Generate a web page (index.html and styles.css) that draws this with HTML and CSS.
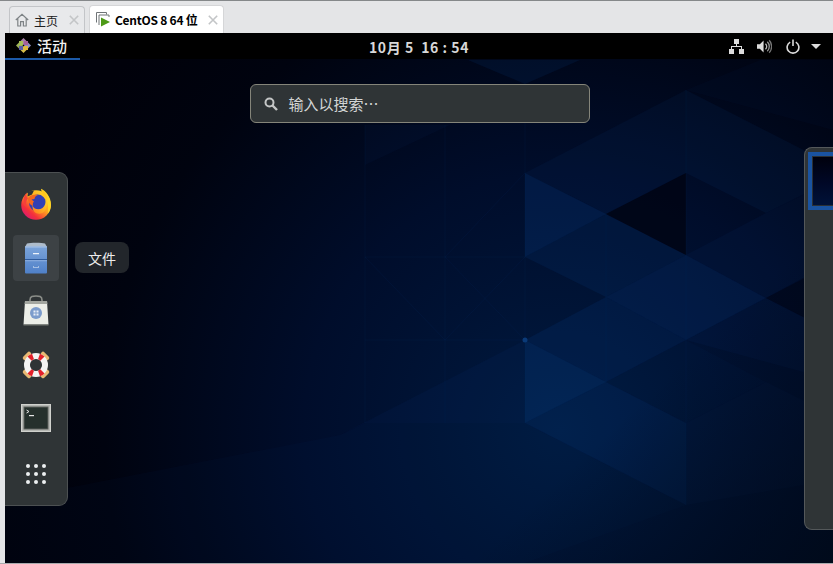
FILE: index.html
```html
<!DOCTYPE html>
<html lang="zh-CN">
<head>
<meta charset="utf-8">
<title>CentOS 8 64 位</title>
<link rel="stylesheet" href="styles.css">
</head>
<body>
<div class="vm">
  <div class="tabs">
    <div class="tab tab-home">
      <svg class="tab-icon" width="14" height="14" viewBox="0 0 14 14"><path d="M.8 7 7 1.200 13.200 7M2.800 5.500V13H5.600V8.600H8.400V13H11.200V5.500" fill="none" stroke="#7d8285" stroke-width="1.200"/></svg>
      <span class="tab-label">主页</span>
      <svg class="tab-close" width="10" height="10" viewBox="0 0 10 10"><path d="M.8.8 9.200 9.200M9.200.8.8 9.200" stroke="#c3c5c7" stroke-width="1.600"/></svg>
    </div>
    <div class="tab tab-active">
      <svg class="tab-icon tab-icon-vm" width="15" height="15" viewBox="0 0 15 15"><path d="M.5 10.500V.5H10.500V2.500M3 13V3H13V5" fill="none" stroke="#6f7477"/><path d="M5 5.500 14 10 5 14.500Z" fill="#4d9a16"/></svg>
      <span class="tab-label tab-label-bold">CentOS 8 64 位</span>
      <svg class="tab-close" width="10" height="10" viewBox="0 0 10 10"><path d="M.8.8 9.200 9.200M9.200.8.8 9.200" stroke="#c3c5c7" stroke-width="1.600"/></svg>
    </div>
  </div>
  <div class="guest">
    <svg class="wallpaper" viewBox="5 33 828 530" preserveAspectRatio="none">
      <defs>
        <radialGradient id="glow" gradientUnits="userSpaceOnUse" cx="560" cy="430" r="570">
          <stop offset="0" stop-color="#001a40"/>
          <stop offset=".45" stop-color="#000d2b"/>
          <stop offset=".8" stop-color="#00030f"/>
          <stop offset="1" stop-color="#00010a"/>
        </radialGradient>
        <linearGradient id="fade" gradientUnits="userSpaceOnUse" x1="620" y1="420" x2="800" y2="610">
          <stop offset="0" stop-color="#000a18" stop-opacity="0"/>
          <stop offset="1" stop-color="#000a18" stop-opacity=".8"/>
        </linearGradient>
      </defs>
      <rect x="5" y="33" width="828" height="530" fill="url(#glow)"/>
      <g fill="#0a4a9a">
        <polygon opacity=".08" points="525,173 686,90 686,173 606,214"/>
        <polygon opacity=".09" points="686,90 833,165 833,180 766,213 686,173"/>
        <polygon opacity=".04" points="686,90 760,60 833,60 833,130"/>
        <polygon opacity=".22" points="525,173 606,214 525,257"/>
        <polygon opacity=".13" points="525,257 606,214 686,255 606,297"/>
        <polygon opacity=".07" points="686,255 766,213 833,180 833,262 766,298"/>
        <polygon opacity=".18" points="606,297 686,255 766,298 686,340"/>
        <polygon opacity=".14" points="525,340 606,297 686,340 606,382"/>
        <polygon opacity=".07" points="686,340 766,298 833,332 833,380"/>
        <polygon opacity=".24" points="525,340 606,382 525,423"/>
        <polygon opacity=".15" points="525,423 606,382 686,423 686,505"/>
        <polygon opacity=".04" points="606,382 686,340 766,382 686,423"/>
        <polygon opacity=".05" points="686,423 766,382 833,415 833,480 686,505"/>
        <polygon opacity=".07" points="525,340 525,423 365,423 340,435"/>
        <polygon opacity=".04" points="340,435 365,423 525,423 686,505 525,563 5,563 5,500"/>
        <polygon opacity=".12" points="468,60 580,60 525,84"/>
        <polygon opacity=".05" points="365,125 450,125 365,165"/>
      </g>
      <g fill="#00030f">
        <polygon opacity=".7" points="606,214 686,173 686,255"/>
        <polygon opacity=".4" points="766,298 805,278 805,318"/>
      </g>
      <g fill="none" stroke="#0a3c80" stroke-opacity=".1">
        <path d="M445 125V423M365 125V423M525 84V423M606 214V382M686 90V505"/>
        <path d="M365 257H525M365 340H525M445 257 525 173M445 340 525 257M365 257 445 340M445 257 525 340"/>
      </g>
      <rect x="5" y="33" width="828" height="530" fill="url(#fade)"/>
      <circle cx="525" cy="340" r="2.500" fill="#0a3a78"/>
    </svg>
    <header class="topbar">
      <div class="activities">
        <svg width="15" height="15" viewBox="0 0 15 15"><rect width="15" height="15" fill="#000"/><path d="M7.500 0 11 3.500 7.500 7 4 3.500Z" fill="#a67ea6"/><path d="M15 7.500 11.500 11 8 7.500 11.500 4Z" fill="#8f8fc0"/><path d="M7.500 15 4 11.500 7.500 8 11 11.500Z" fill="#d8bf4a"/><path d="M0 7.500 3.500 4 7 7.500 3.500 11Z" fill="#9db35a"/><rect x="3" y="3" width="4" height="4" fill="#a5bf55"/><rect x="8" y="3" width="4" height="4" fill="#a5609a"/><rect x="3" y="8" width="4" height="4" fill="#5d5fa5"/><rect x="8" y="8" width="4" height="4" fill="#e2b93c"/></svg>
        <span>活动</span>
      </div>
      <div class="clock">10月 5&nbsp; 16 : 54</div>
      <div class="status">
        <svg width="15" height="15" viewBox="0 0 15 15"><path d="M5 0H10V5H8V7H13V10H15V15H10V10H12V8H3V10H5V15H0V10H2V7H7V5H5Z" fill="#dcdcdc"/></svg>
        <svg class="volume" width="15" height="15" viewBox="0 0 16 15"><path d="M0 5H3L7 1V14L3 10H0Z" fill="#dcdcdc"/><path d="M9 4.500A4 4 0 0 1 9 10.500" fill="none" stroke="#bbb" stroke-width="1.400"/><path d="M11 2.500A7 7 0 0 1 11 12.500" fill="none" stroke="#999" stroke-width="1.400"/><path d="M13 .8A10 10 0 0 1 13 14.200" fill="none" stroke="#777" stroke-width="1.400"/></svg>
        <svg class="power" width="14" height="15" viewBox="0 0 15 15"><path d="M4.500 2.800A6.300 6.300 0 1 0 10.500 2.800" fill="none" stroke="#dcdcdc" stroke-width="1.700"/><path d="M7.500 0V7" stroke="#dcdcdc" stroke-width="1.700"/></svg>
        <svg class="caret" width="10" height="5" viewBox="0 0 10 5"><path d="M0 0H10L5 5Z" fill="#dcdcdc"/></svg>
      </div>
    </header>
    <div class="overview">
      <nav class="dock">
        <div class="dock-item">
          <svg width="32" height="32" viewBox="0 0 32 32">
            <defs>
              <linearGradient id="ffo" x1=".9" y1=".05" x2=".1" y2=".95"><stop offset="0" stop-color="#ffe02b"/><stop offset=".45" stop-color="#ffa01f"/><stop offset=".75" stop-color="#f5303a"/><stop offset="1" stop-color="#d5147f"/></linearGradient>
              <linearGradient id="ffs" x1="1" y1="0" x2="0" y2="1"><stop offset="0" stop-color="#ffdc26"/><stop offset="1" stop-color="#ff7a1f"/></linearGradient>
            </defs>
            <circle cx="16" cy="17" r="14.800" fill="url(#ffo)"/>
            <path d="M21 .8C26 3 31 9 31 17 31 20 30 23 28 25.500 28.500 20 28 13 25 9 23.500 6.500 21.500 4 21 .8Z" fill="#ffd526"/>
            <path d="M8 3.500 7.500 8.500 12 6.500 14 2.500Z" fill="#2f3436"/>
            <path d="M7 4.500C6 7 6.500 9 8 10 5.500 13 5.500 17 7 20L4 17C3 11 4 7 7 4.500Z" fill="#f5403a"/>
            <circle cx="17.500" cy="15" r="8.500" fill="#3140b4"/>
            <path d="M8 10C10 7 14 6 18 7 15.500 8 14.500 9.500 14.500 11L11.500 11.500 14 13.500C13 14.500 12.500 16 13 18 10 17 7.500 13.500 8 10Z" fill="#f4671f"/>
            <path d="M12.500 17.500C14 21.500 19 22.500 22.500 20 25 18 26 15 25.500 11 28 16 27 22 22.500 25 17 27.500 12 23.500 12.500 17.500Z" fill="url(#ffs)"/>
            <path d="M21 1C25 3.500 27.500 7.500 27.500 12 26 9.500 24 8.500 22.500 8 23 5.500 22 3 21 1Z" fill="#ffc61f"/>
          </svg>
        </div>
        <div class="dock-item dock-item-hover">
          <svg width="24" height="32" viewBox="0 0 24 32">
            <defs>
              <linearGradient id="cab" x1="0" y1="0" x2="0" y2="1"><stop offset="0" stop-color="#7ba4da"/><stop offset="1" stop-color="#4f80c8"/></linearGradient>
            </defs>
            <path d="M3 1.500C6 .5 18 .5 21 1.500L23 5H1Z" fill="#aebccb"/>
            <rect x="1" y="4.500" width="22" height="27" rx="1" fill="url(#cab)"/>
            <rect x="1" y="4.500" width="22" height="1" fill="#a9c4ea"/>
            <rect x="1" y="17" width="22" height="1.200" fill="#2f5b9c"/>
            <rect x="1" y="18.200" width="22" height="1" fill="#8fb1e2"/>
            <path d="M9 11H15V12.200H9ZM9 24 10 25H14L15 24V25.500H9Z" fill="#eef3fa"/>
          </svg>
        </div>
        <div class="dock-item">
          <svg class="nudge-up" width="26" height="31" viewBox="0 0 26 31">
            <path d="M7 9V5C7 1 10 1 13 1S19 1 19 5V9" fill="none" stroke="#8a8d88" stroke-width="1.600"/>
            <path d="M2 6H24L25.500 29.500H.5Z" fill="#eceee8"/>
            <path d="M2 6H24L24.400 9H1.600Z" fill="#a3a6a0"/>
            <path d="M.5 29.500H25.500L25.500 30.500H.5Z" fill="#777a75"/>
            <circle cx="13" cy="18" r="6" fill="#7c9ccc"/>
            <path d="M10.500 15.500H12.500V17.500H10.500ZM13.500 15.500H15.500V17.500H13.500ZM10.500 18.500H12.500V20.500H10.500ZM13.500 18.500H15.500V20.500H13.500Z" fill="#e8eef7"/>
          </svg>
        </div>
        <div class="dock-item">
          <svg class="nudge-up-small" width="30" height="30" viewBox="0 0 30 30">
            <g stroke="#e8b973" stroke-width="4.500" stroke-linecap="round"><path d="M4 8 8 4M22 4 26 8M4 22 8 26M22 26 26 22"/></g>
            <circle cx="15" cy="15" r="9" fill="none" stroke="#f3f3f3" stroke-width="6"/>
            <g fill="none" stroke="#e3202a" stroke-width="6">
              <path d="M8.600 8.600A9 9 0 0 1 12 6.500"/>
              <path d="M18 6.500A9 9 0 0 1 21.400 8.600"/>
              <path d="M8.600 21.400A9 9 0 0 0 12 23.500"/>
              <path d="M18 23.500A9 9 0 0 0 21.400 21.400"/>
            </g>
            <circle cx="15" cy="15" r="5.500" fill="#2f3436"/>
          </svg>
        </div>
        <div class="dock-item">
          <svg class="nudge-up" width="30" height="28" viewBox="0 0 30 28">
            <rect width="30" height="28" fill="#b4b6b2"/>
            <rect x=".5" y=".5" width="29" height="27" fill="none" stroke="#d0d1cd"/>
            <rect x="3" y="3" width="24" height="22" fill="#25302c" stroke="#5b5e5a"/>
            <path d="M5.500 6 8 7.500 5.500 9" fill="none" stroke="#e4e4e4"/>
            <rect x="8" y="11" width="5" height="1.200" fill="#e4e4e4"/>
          </svg>
        </div>
        <div class="dock-item">
          <div class="app-grid">
            <i></i><i></i><i></i><i></i><i></i><i></i><i></i><i></i><i></i>
          </div>
        </div>
        <div class="tooltip">文件</div>
      </nav>
      <main class="center">
        <div class="search">
          <svg width="14" height="14" viewBox="0 0 14 14"><circle cx="5.500" cy="5.500" r="4" fill="none" stroke="#c4c6c6" stroke-width="2"/><path d="M8.500 8.500 13 13" stroke="#c4c6c6" stroke-width="2.400"/></svg>
          <span>输入以搜索…</span>
        </div>
      </main>
      <aside class="workspaces">
        <div class="thumb"><div class="thumb-screen"></div></div>
      </aside>
    </div>
  </div>
</div>
</body>
</html>
```
FILE: styles.css
```css
* { box-sizing: border-box; }
html, body { margin: 0; height: 100%; overflow: hidden; }
body { font-family: "Noto Sans CJK SC", "Noto Sans", sans-serif; background: #e4e5e7; }

.vm {
  width: 833px;
  height: 564px;
  display: flex;
  flex-direction: column;
  border-top: 1px solid #85888a;
  border-bottom: 1px solid #a8abad;
  background: #e4e5e7;
}

.tabs {
  height: 32px;
  flex: none;
  display: flex;
  align-items: flex-end;
  gap: 4px;
  padding-left: 9px;
}
.tab {
  display: flex;
  align-items: center;
  border: 1px solid #c3c5c8;
  border-bottom: 0;
  border-radius: 4px 4px 0 0;
  color: #202020;
  font-size: 12px;
}
.tab-home { width: 76px; height: 27px; padding: 0 5px; background: #e8e9eb; }
.tab-active { width: 135px; height: 28px; padding: 0 5px 0 6px; background: #fff; border-color: #d5d6d8; }
.tab-icon { flex: none; margin-right: 5px; }
.tab-icon-vm { margin-right: 4px; }
.tab-label { flex: 1; white-space: nowrap; }
.tab-label-bold { font-weight: 700; color: #000; font-size: 12px; letter-spacing: -.25px; }
.tab-close { flex: none; }

.guest {
  position: relative;
  flex: 1;
  margin-left: 5px;
  display: flex;
  flex-direction: column;
  overflow: hidden;
  background: #000;
}
.wallpaper {
  position: absolute;
  inset: 0;
  width: 100%;
  height: 100%;
}

.topbar {
  position: relative;
  height: 26px;
  flex: none;
  display: grid;
  grid-template-columns: 1fr auto 1fr;
  align-items: center;
  background: #000;
  color: #e6e6e6;
}
.activities {
  width: 75px;
  height: 27px;
  padding: 0 0 0 11px;
  display: flex;
  align-items: center;
  gap: 6px;
  border-bottom: 2px solid #1c5aa8;
  font-size: 15px;
  font-weight: 500;
  color: #f2f2f2;
  align-self: start;
  position: relative;
  z-index: 1;
}
.clock {
  font-size: 14px;
  font-weight: 700;
  letter-spacing: .55px;
  color: #d8d8d8;
  white-space: nowrap;
}
.status {
  display: flex;
  justify-content: flex-end;
  align-items: center;
  padding-right: 12px;
}
.volume { margin-left: 13px; }
.power { margin-left: 14px; }
.caret { margin-left: 11px; }

.overview {
  position: relative;
  flex: 1;
  display: flex;
  align-items: flex-start;
}

.dock {
  position: relative;
  flex: none;
  width: 63px;
  margin-top: 113px;
  padding: 8px;
  display: flex;
  flex-direction: column;
  gap: 8px;
  background: #2f3436;
  border: 1px solid #4c5052;
  border-left: 0;
  border-radius: 0 9px 9px 0;
}
.dock-item {
  width: 46px;
  height: 46px;
  display: flex;
  align-items: center;
  justify-content: center;
  border-radius: 4px;
}
.dock-item-hover { background: #3d4245; }
.nudge-up { margin-bottom: 4px; }
.nudge-up-small { margin-bottom: 2px; }
.app-grid {
  display: grid;
  grid-template-columns: repeat(3, 4px);
  gap: 4px;
}
.app-grid i {
  width: 4px;
  height: 4px;
  border-radius: 50%;
  background: #eceff1;
}
.tooltip {
  position: absolute;
  left: 70px;
  top: 69px;
  width: 54px;
  height: 31px;
  display: flex;
  align-items: center;
  justify-content: center;
  border-radius: 8px;
  background: #22262b;
  color: #ececec;
  font-size: 14px;
}

.center {
  flex: 1;
  padding-top: 25px;
  display: flex;
  justify-content: center;
}
.search {
  width: 340px;
  height: 39px;
  margin-left: -33px;
  padding-left: 13px;
  display: flex;
  align-items: center;
  gap: 11px;
  background: #2f3436;
  border: 1px solid #85857a;
  border-radius: 6px;
  color: #d3d5d5;
  font-size: 15px;
}

.workspaces {
  flex: none;
  width: 29px;
  height: 383px;
  margin-top: 88px;
  padding: 4px 0 0 3px;
  background: #2f3436;
  border: 1px solid #54585a;
  border-right: 0;
  border-radius: 8px 0 0 8px;
}
.thumb {
  height: 58px;
  border: 4px solid #1a53a0;
  border-right: 0;
}
.thumb-screen {
  height: 100%;
  border: 1px solid #2b3034;
  border-right: 0;
  background: linear-gradient(180deg, #00010d 0%, #000827 55%, #001238 100%);
}
```
